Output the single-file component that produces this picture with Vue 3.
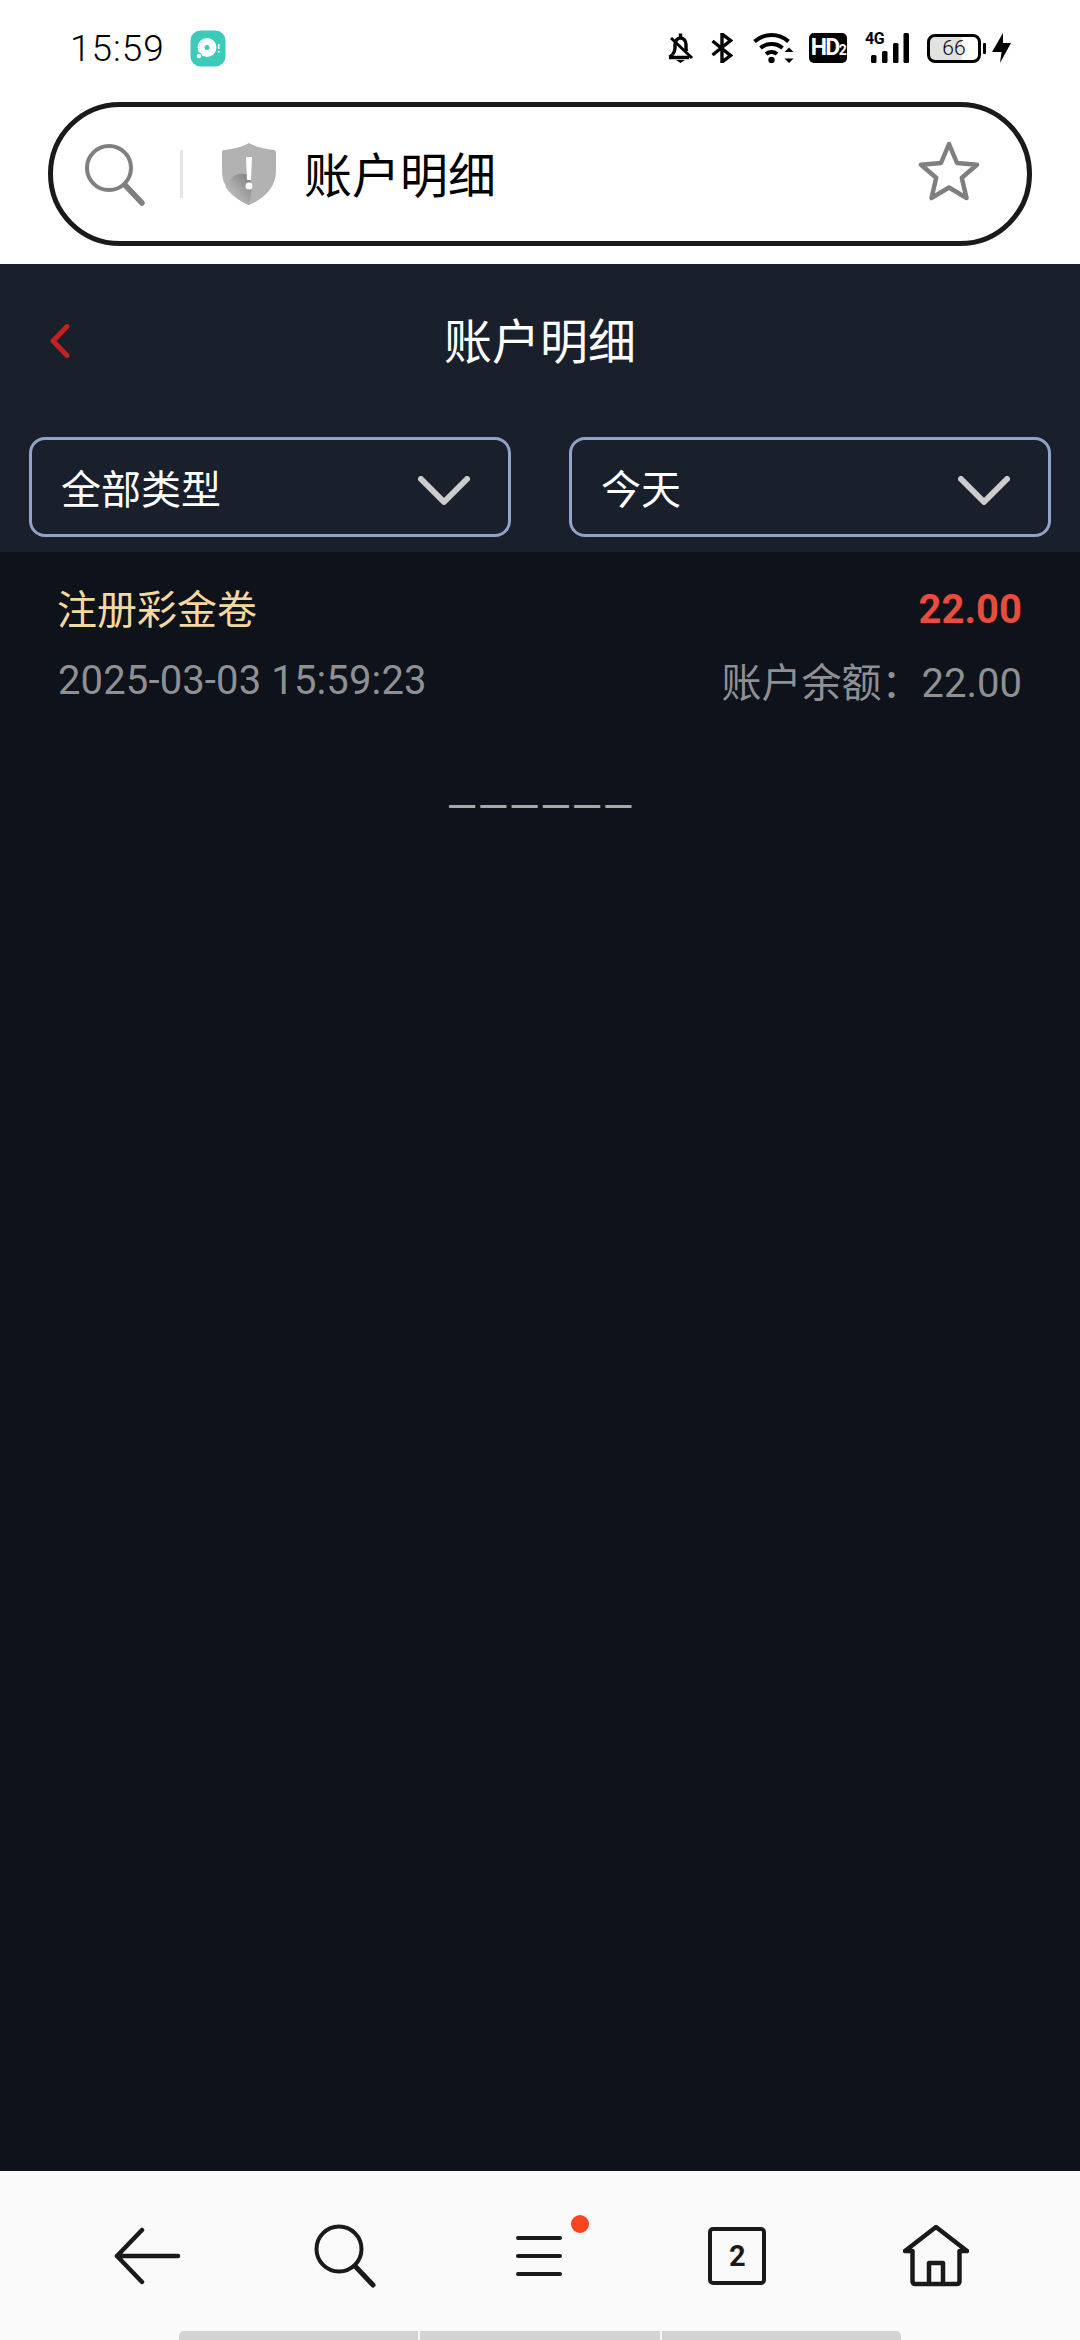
<template>
  <div class="page">
    <div class="status-bar">
      <div class="status-left">
        <span class="time">15:59</span>
        <svg class="app-icon" width="36" height="37" viewBox="0 0 36 37">
          <rect x="0.5" y="0.5" width="35" height="36" rx="10" fill="#3ccbb8" />
          <circle cx="17" cy="17.500" r="9.500" fill="#fff" />
          <circle cx="17" cy="17.500" r="2.500" fill="#3ccbb8" />
          <circle cx="9" cy="26" r="2.800" fill="#fff" stroke="#3ccbb8" stroke-width="1" />
          <rect x="28" y="14" width="1.600" height="5" fill="#fff" />
          <rect x="28" y="21" width="1.600" height="1.600" fill="#fff" />
        </svg>
      </div>
      <div class="status-right">
        <svg class="s-bell" width="26" height="30" viewBox="0 0 26 30">
          <path d="M12.500 0.500v4M4.500 21.500c1.700-2 2.500-3.600 2.500-6.500v-3.500c0-3.600 2.400-6.500 5.500-6.500 3.100 0 5.500 2.900 5.500 6.500v3.500c0 1.300.2 2.300.5 3.300M1 24.500h20" fill="none" stroke="#000" stroke-width="3.400" />
          <path d="M1.500 24c1-.9 2.300-1.600 3-2.500" fill="none" stroke="#000" stroke-width="3.400" />
          <path d="M3 5l21 20" fill="none" stroke="#000" stroke-width="3" />
          <path d="M8 27h9l-4.500 3z" fill="#000" />
        </svg>
        <svg class="s-bt" width="22" height="30" viewBox="0 0 22 30">
          <path d="M1.500 8l18 14.500-8.500 6.500V1l8.500 6.500L1.500 22" fill="none" stroke="#000" stroke-width="3.400" />
        </svg>
        <svg class="s-wifi" width="41" height="30" viewBox="0 0 41 30">
          <path d="M1.500 8.500C6 4.500 12 2 18.500 2s12.500 2.500 17 6.500M7.500 15c3-2.600 6.800-4 11-4s8 1.400 11 4M13 21c1.500-1.200 3.400-2 5.500-2s4 .8 5.500 2" fill="none" stroke="#000" stroke-width="4" />
          <circle cx="18.500" cy="27" r="3.200" fill="#000" />
          <path d="M36 14.500l4.500 4.500h-9zM36 30l-4.500-4.500h9z" fill="#000" />
        </svg>
        <span class="s-hd">HD<small>2</small></span>
        <div class="s-signal">
          <span class="s-4g">4G</span>
          <svg width="44" height="30" viewBox="0 0 44 30">
            <rect x="6" y="22" width="5.500" height="8" rx="1.500" fill="#000" />
            <rect x="17" y="18" width="5.500" height="12" rx="1.500" fill="#000" />
            <rect x="28" y="10" width="5.500" height="20" rx="1.500" fill="#000" />
            <rect x="38.500" y="0" width="5.500" height="30" rx="1.500" fill="#000" />
          </svg>
        </div>
        <div class="s-battery">
          <div class="s-battery-body"><span>66</span></div>
          <i class="s-battery-tip"></i>
        </div>
        <svg class="s-bolt" width="19" height="30" viewBox="0 0 19 30">
          <path d="M11 0L0 19h9.500L8 30l11-20h-8z" fill="#000" />
        </svg>
      </div>
    </div>

    <div class="search-wrap">
      <div class="search-bar">
        <svg class="search-icon" width="60" height="62" viewBox="0 0 60 62">
          <circle cx="24" cy="24" r="22" fill="none" stroke="#7f7f7f" stroke-width="4" />
          <path d="M40 41l17 18" fill="none" stroke="#7f7f7f" stroke-width="5.500" stroke-linecap="round" />
        </svg>
        <i class="search-divider"></i>
        <svg class="shield" width="54" height="62" viewBox="0 0 54 62">
          <defs>
            <linearGradient id="shieldWave" x1="0.900" y1="0.100" x2="0.100" y2="0.900">
              <stop offset="0" stop-color="#858585" />
              <stop offset="1" stop-color="#c9c9c9" />
            </linearGradient>
          </defs>
          <path d="M27 0c6 3.500 15 6 25 7 1.300.2 2 1 2 2.300V28c0 15-10 27-27 34C10 55 0 43 0 28V9.300C0 8 .7 7.200 2 7 12 6 21 3.500 27 0z" fill="#b2b2b2" />
          <path d="M3.500 44C8 34 15 28 27 32c3 9 3 20 0 30C16 57 8 51 3.500 44z" fill="url(#shieldWave)" />
          <path d="M24 14h6l-1 23h-4z" fill="#fff" />
          <circle cx="27" cy="43" r="3.500" fill="#fff" />
        </svg>
        <span class="search-text">账户明细</span>
        <svg class="star" width="62" height="60" viewBox="0 0 62 60">
          <path d="M31 3l8 19 20 1.800-15.200 13L48.500 57 31 46.500 13.500 57l4.700-20.200L3 23.800 23 22z" fill="none" stroke="#7f7f7f" stroke-width="4.500" stroke-linejoin="round" />
        </svg>
      </div>
    </div>

    <div class="top-panel">
      <div class="nav">
        <svg class="back" width="20" height="34" viewBox="0 0 20 34">
          <path d="M17 2.500L3 17l14 14.500" fill="none" stroke="#c0221f" stroke-width="5" stroke-linecap="round" stroke-linejoin="round" />
        </svg>
        <h1 class="nav-title">账户明细</h1>
        <span></span>
      </div>
      <div class="filters">
        <div class="filter" v-for="f in filters" :key="f">
          <span>{{ f }}</span>
          <svg width="52" height="30" viewBox="0 0 52 30">
            <path d="M3 3l23 23L49 3" fill="none" stroke="#cccccc" stroke-width="6" stroke-linecap="round" stroke-linejoin="round" />
          </svg>
        </div>
      </div>
    </div>

    <div class="content">
      <div class="record" v-for="r in records" :key="r.time">
        <div class="record-row">
          <span class="record-name">{{ r.name }}</span>
          <span class="record-amount">{{ r.amount }}</span>
        </div>
        <div class="record-row sub">
          <span class="record-time">{{ r.time }}</span>
          <span>账户余额：{{ r.balance }}</span>
        </div>
      </div>
      <div class="end-line">——————</div>
    </div>

    <div class="bottom-bar">
      <div class="bottom-icons">
        <div class="bottom-item">
          <svg width="68" height="60" viewBox="0 0 68 60">
            <path d="M64 30H3M28 4L3 30l25 26" fill="none" stroke="#1a1a1a" stroke-width="4.500" stroke-linecap="round" stroke-linejoin="round" />
          </svg>
        </div>
        <div class="bottom-item">
          <svg class="b-search" width="62" height="64" viewBox="0 0 62 64">
            <circle cx="25" cy="25" r="22.500" fill="none" stroke="#1a1a1a" stroke-width="4" />
            <path d="M41 42l18 19" fill="none" stroke="#1a1a1a" stroke-width="5" stroke-linecap="round" />
          </svg>
        </div>
        <div class="bottom-item">
          <div class="menu-icon">
            <i></i><i></i><i></i>
            <b class="menu-dot"></b>
          </div>
        </div>
        <div class="bottom-item">
          <div class="tab-count">2</div>
        </div>
        <div class="bottom-item">
          <svg class="b-home" width="66" height="62" viewBox="0 0 66 62">
            <path d="M2 26L33 2l31 24h-7.500v30c0 2-1 3-3 3h-41c-2 0-3-1-3-3V26z" fill="none" stroke="#1a1a1a" stroke-width="4.500" stroke-linecap="round" stroke-linejoin="round" />
            <path d="M26 59V38h14v21" fill="none" stroke="#1a1a1a" stroke-width="4.500" stroke-linejoin="round" />
          </svg>
        </div>
      </div>
      <div class="indicator"><i></i><i></i><i></i></div>
    </div>
  </div>
</template>

<script setup>
import { ref } from 'vue'

const filters = ref(['全部类型', '今天'])

const records = ref([
  {
    name: '注册彩金卷',
    amount: '22.00',
    time: '2025-03-03 15:59:23',
    balance: '22.00'
  }
])
</script>

<style>
html,
body {
  margin: 0;
  padding: 0;
  background: #fff;
}
</style>

<style scoped>
.page {
  width: 1080px;
  height: 2340px;
  display: flex;
  flex-direction: column;
  overflow: hidden;
  font-family: Roboto, "Noto Sans CJK SC", sans-serif;
}

.status-bar {
  height: 96px;
  padding: 0 69px 0 70px;
  display: flex;
  justify-content: space-between;
  align-items: center;
  box-sizing: border-box;
  flex-shrink: 0;
}

.status-left {
  display: flex;
  align-items: center;
  gap: 25px;
}

.time {
  font-size: 37px;
  font-weight: 300;
  color: #000;
  letter-spacing: 1px;
}

.status-right {
  display: flex;
  align-items: center;
  height: 30px;
}

.s-bell {
  margin-right: 17px;
}

.s-bt {
  margin-right: 20px;
}

.s-wifi {
  margin-right: 15px;
}

.s-hd {
  width: 38px;
  height: 30px;
  background: #000;
  color: #fff;
  border-radius: 5px;
  font-size: 23px;
  font-weight: 700;
  line-height: 30px;
  text-align: center;
  letter-spacing: -1.500px;
  margin-right: 18px;
}

.s-hd small {
  font-size: 14px;
}

.s-signal {
  position: relative;
  width: 44px;
  height: 30px;
  margin-right: 18px;
}

.s-4g {
  position: absolute;
  left: 0;
  top: -3px;
  font-size: 16px;
  font-weight: 700;
  line-height: 18px;
  letter-spacing: -0.500px;
  color: #000;
}

.s-battery {
  display: flex;
  align-items: center;
  gap: 2px;
  margin-right: 6px;
}

.s-battery-body {
  width: 54px;
  height: 29px;
  box-sizing: border-box;
  border: 3px solid #000;
  border-radius: 8px;
  background: linear-gradient(to right, #e2e2e2 66%, #fff 66%);
  display: flex;
  align-items: center;
  justify-content: center;
}

.s-battery-body span {
  font-size: 21px;
  font-weight: 300;
  color: #000;
  line-height: 1;
}

.s-battery-tip {
  width: 3px;
  height: 11px;
  background: #000;
  border-radius: 1px;
}

.search-wrap {
  height: 168px;
  padding: 6px 48px 0 48px;
  box-sizing: border-box;
  flex-shrink: 0;
}

.search-bar {
  height: 144px;
  box-sizing: border-box;
  border: 5px solid #1a1a1a;
  border-radius: 72px;
  padding: 0 47px 0 32px;
  display: flex;
  align-items: center;
}

.search-icon {
  margin-top: 2px;
}

.search-divider {
  width: 3px;
  height: 48px;
  background: #e5e5e5;
  margin: 0 39px 0 35px;
}

.search-text {
  margin-left: 28px;
  margin-top: 6px;
  font-size: 48px;
  color: #000;
  flex: 1;
  line-height: 1;
}

.star {
  margin-bottom: 6px;
}

.top-panel {
  height: 288px;
  background: #191f2b;
  flex-shrink: 0;
}

.nav {
  height: 156px;
  margin-bottom: 17px;
  padding: 0 50px;
  display: grid;
  grid-template-columns: 1fr auto 1fr;
  align-items: center;
}

.back {
  margin-bottom: 2px;
}

.nav-title {
  margin: 0 0 8px;
  font-size: 48px;
  font-weight: 400;
  color: #fff;
}

.filters {
  display: grid;
  grid-template-columns: 1fr 1fr;
  gap: 58px;
  padding: 0 29px;
}

.filter {
  height: 100px;
  box-sizing: border-box;
  border: 3px solid #93a2c9;
  border-radius: 16px;
  padding: 0 38px 0 29px;
  display: flex;
  align-items: center;
  justify-content: space-between;
  color: #fff;
  font-size: 40px;
}

.filter svg {
  margin-top: 8px;
}

.content {
  flex: 1;
  background: #0e121a;
  padding: 28px 58px 0;
}

.record-row {
  display: flex;
  justify-content: space-between;
  align-items: center;
  height: 56px;
}

.record-row.sub {
  margin-top: 16px;
  color: #8f9093;
  font-size: 40px;
}

.record-time {
  letter-spacing: 0.130px;
}

.record-name {
  color: #f5d8a0;
  font-size: 40px;
  margin-left: -1px;
  margin-bottom: 2px;
}

.record-amount {
  color: #e74c3c;
  font-size: 40px;
  font-weight: 700;
  margin-top: 3px;
}

.end-line {
  margin-top: 72px;
  text-align: center;
  font-size: 40px;
  line-height: 56px;
  color: #a8a8a8;
}

.bottom-bar {
  height: 169px;
  background: #fafafa;
  flex-shrink: 0;
  display: flex;
  flex-direction: column;
}

.bottom-icons {
  flex: 1;
  padding: 10px 46px 0 50px;
  display: grid;
  grid-template-columns: repeat(5, 1fr);
  align-items: center;
}

.bottom-item {
  display: flex;
  justify-content: center;
}

.menu-icon {
  position: relative;
  width: 46px;
  margin-right: 6px;
  display: flex;
  flex-direction: column;
  gap: 14px;
}

.menu-icon i {
  display: block;
  height: 4px;
  background: #1a1a1a;
  border-radius: 2px;
}

.menu-dot {
  position: absolute;
  left: 55px;
  top: -21px;
  width: 18px;
  height: 18px;
  border-radius: 50%;
  background: #fb4420;
}

.tab-count {
  width: 58px;
  height: 58px;
  margin-right: 3px;
  box-sizing: border-box;
  border: 4px solid #1a1a1a;
  border-radius: 5px;
  display: flex;
  align-items: center;
  justify-content: center;
  font-size: 29px;
  font-weight: 700;
  color: #1a1a1a;
}

.indicator {
  width: 722px;
  height: 9px;
  margin: 0 auto;
  display: grid;
  grid-template-columns: repeat(3, 1fr);
  gap: 2px;
  border-radius: 5px 5px 0 0;
  overflow: hidden;
}

.indicator i {
  background: #d3d3d3;
}
</style>
